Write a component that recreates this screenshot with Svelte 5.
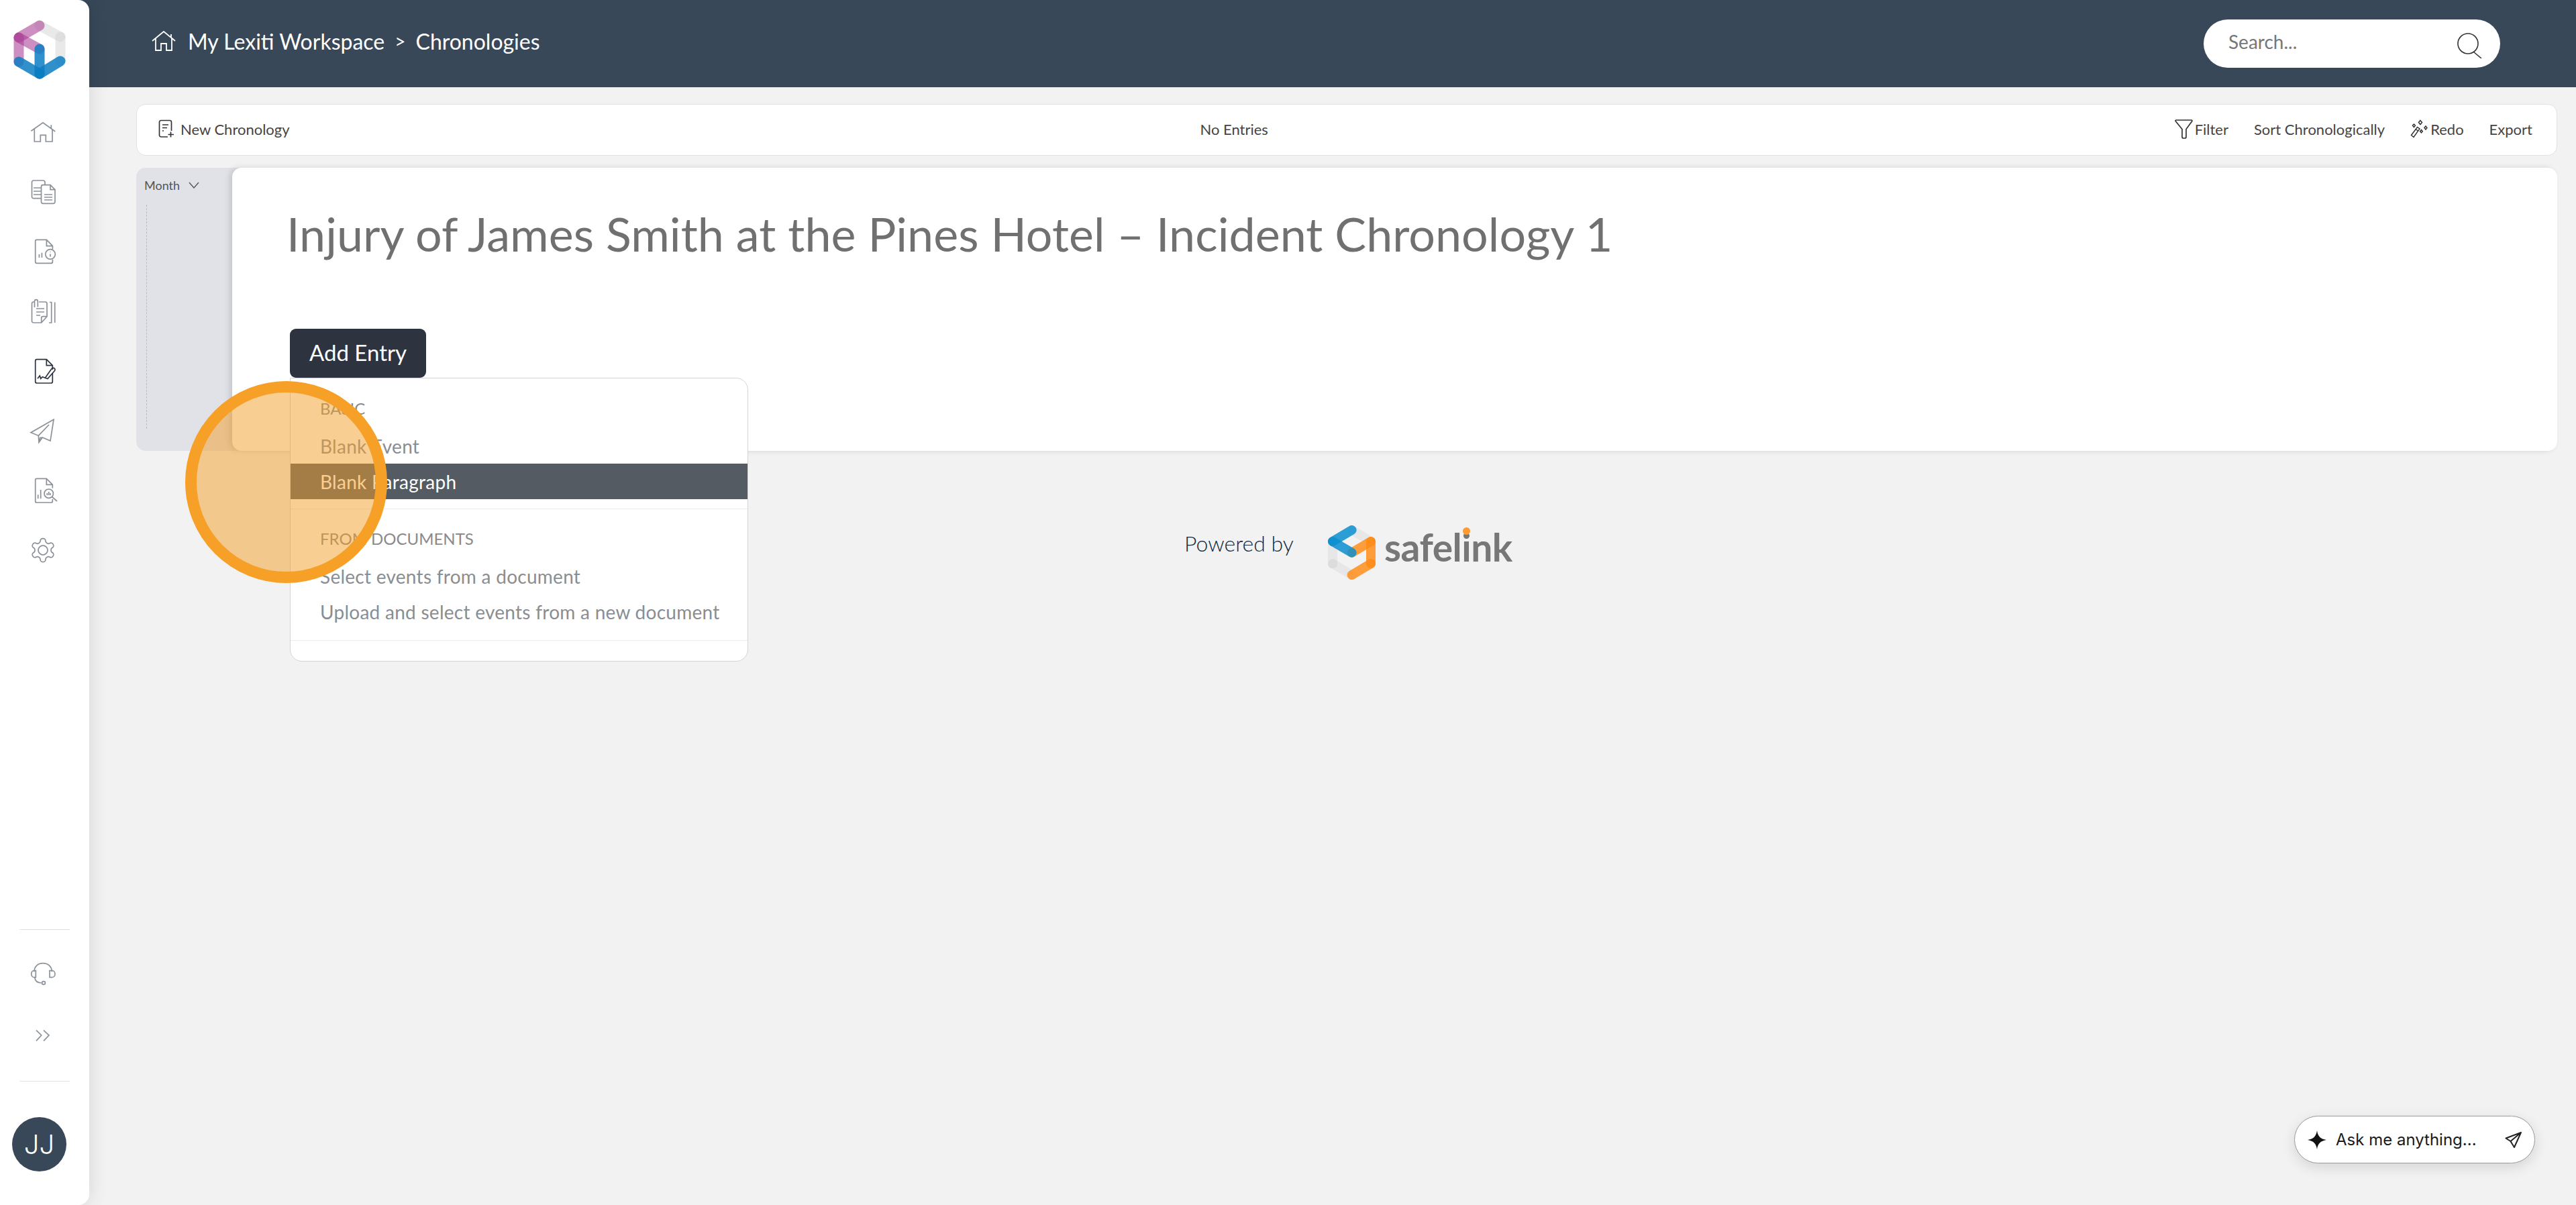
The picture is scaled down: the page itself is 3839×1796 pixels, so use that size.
<script>
  const grey = "#8b929a";
  const menuBasic = ["Blank Event", "Blank Paragraph"];
  const menuDocs = ["Select events from a document", "Upload and select events from a new document"];
</script>

<div class="app">
  <aside class="sidebar">
    <svg class="logo" viewBox="0 0 90 100" fill="none" stroke-width="15" stroke-linecap="round">
      <g stroke="#d4d4d4" stroke-opacity=".5">
        <path d="M45 13 76 30" />
        <path d="M76 30V66" />
      </g>
      <g stroke="#a83c96" stroke-opacity=".58">
        <path d="M14 31 45 13" />
        <path d="M14 31 45 48" />
        <path d="M14 31V67" />
      </g>
      <g stroke="#0a7cc2" stroke-opacity=".85">
        <path d="M14 67 45 85" />
        <path d="M45 85 76 66" />
        <path d="M45 48V85" />
      </g>
    </svg>

    <nav class="nav">
      <svg viewBox="0 0 48 48" stroke={grey}>
        <path d="M6.3 22.3 24 9.7 42.3 23M36.3 13.3V19M11.3 19V38h9V28.3h8V38H38V19" />
      </svg>
      <svg viewBox="0 0 48 48" stroke={grey}>
        <path d="M21.5 33.7H10a2.500 2.500 0 0 1-2.500-2.500V9.500A2.500 2.500 0 0 1 10 7h14a3 3 0 0 1 3 3v3.700M10 18h11.500M10 23h11.500M10 28h11.500" />
        <path d="M24 13.700h11l7 7v18.100a2.500 2.500 0 0 1-2.500 2.500H24a2.500 2.500 0 0 1-2.500-2.500V16.200a2.500 2.500 0 0 1 2.500-2.500zM35 13.700v7h7M26 28h12M26 32h12M26 36h12" />
      </svg>
      <svg viewBox="0 0 48 48" stroke={grey}>
        <path d="M38.400 20.500v-4.800l-9-9.400H14.700a2 2 0 0 0-2 2v31a2 2 0 0 0 2 2h21.700a2 2 0 0 0 2-2v-3.500M29.400 6.300v9.400h9M18.400 33v-5M22.400 33v-7.300" />
        <circle cx="35" cy="28" r="7.300" />
        <path d="M35 27.500v4M35 24.300v.8" />
      </svg>
      <svg viewBox="0 0 48 48" stroke={grey}>
        <path d="M18 10h9.500a2.500 2.500 0 0 1 2.500 2.500v19.200L21.700 41H10a2.500 2.500 0 0 1-2.500-2.500v-26A2.500 2.500 0 0 1 10 10h1M21.700 41v-7a2.300 2.300 0 0 1 2.300-2.300h6" />
        <path d="M11.500 18V9a2.400 2.400 0 0 1 4.800 0v8.500M14 20h12M14 25h12M14 30h6" />
        <path d="M33 41h3.700V10.500H34M41.700 10.500V41" />
      </svg>
      <svg viewBox="0 0 48 48" stroke="#2c3340" stroke-width="2.100">
        <path d="M38.300 22v-6.300l-9-9H15a2.300 2.300 0 0 0-2.300 2.300v30.700a2.300 2.300 0 0 0 2.300 2.300h21a2.300 2.300 0 0 0 2.300-2.300V27M29.300 6.700v9h9" />
        <path d="M16 35.300 19.300 31l1.400 4.300 2.600-2.600 4 1.600L37 20.500a2.700 2.700 0 0 1 4.500 3L31 35.500l-3.700-1.200" />
      </svg>
      <svg viewBox="0 0 48 48" stroke={grey}>
        <path d="M40 7.300 6 26.700l11.300 4.600.7 10 5.300-7.300L35 39zM17.300 31.300 33 15M18 41.300l2-7 3.300-.3" />
      </svg>
      <svg viewBox="0 0 48 48" stroke={grey}>
        <path d="M38.300 20.500v-5.200l-9-9H14.700a2 2 0 0 0-2 2V40a2 2 0 0 0 2 2h21.600a2 2 0 0 0 2-2v-3M29.300 6.300v9h9M16.700 36.300v-6M20.700 36.300V23" />
        <circle cx="32.700" cy="28.700" r="6.700" />
        <path d="M30.300 31v-3M32.700 31v-5M35 31v-3M37.500 33.500 45 40" />
      </svg>
      <svg class="gear" viewBox="0 0 24 24" stroke={grey} stroke-width="1.050">
        <path d="M12.220 2h-.44a2 2 0 0 0-2 2v.18a2 2 0 0 1-1 1.730l-.43.250a2 2 0 0 1-2 0l-.150-.080a2 2 0 0 0-2.730.730l-.220.380a2 2 0 0 0 .730 2.730l.150.100a2 2 0 0 1 1 1.720v.510a2 2 0 0 1-1 1.740l-.15.090a2 2 0 0 0-.730 2.730l.220.380a2 2 0 0 0 2.730.730l.150-.080a2 2 0 0 1 2 0l.430.250a2 2 0 0 1 1 1.730V20a2 2 0 0 0 2 2h.440a2 2 0 0 0 2-2v-.180a2 2 0 0 1 1-1.730l.430-.250a2 2 0 0 1 2 0l.150.080a2 2 0 0 0 2.730-.730l.220-.390a2 2 0 0 0-.730-2.730l-.150-.080a2 2 0 0 1-1-1.740v-.500a2 2 0 0 1 1-1.740l.15-.090a2 2 0 0 0 .730-2.730l-.220-.380a2 2 0 0 0-2.730-.730l-.15.080a2 2 0 0 1-2 0l-.43-.25a2 2 0 0 1-1-1.730V4a2 2 0 0 0-2-2z" />
        <circle cx="12" cy="12" r="4" />
      </svg>
    </nav>

    <div class="side-foot">
      <hr />
      <svg class="headset" viewBox="0 0 48 48" stroke={grey}>
        <path d="M11 21.300C11 13.500 16.500 8.700 24 8.700s13.300 4.800 13.300 12.600M13.300 19.700H11a4.300 5 0 0 0 0 10h2.300zM34 19.700h3.500a4.500 5 0 0 1 0 10H34zM11.700 29.700c.5 5 4 8.300 10 8.300" />
        <circle cx="25" cy="38" r="2.400" />
      </svg>
      <svg class="chev" viewBox="0 0 48 48" stroke={grey}>
        <path d="M14 16.700l7.700 7.300-7.700 8.300M25 16.700l8 7.300-8 8.300" />
      </svg>
      <hr class="second" />
      <div class="avatar">JJ</div>
    </div>
  </aside>

  <div class="main">
    <header class="topbar">
      <div class="crumbs">
        <svg class="crumb-home" viewBox="0 0 36 30" stroke="#fff">
          <path d="M1 15 18 1l17 14M29 5v5M6 11v18h8v-10h8v10h8V11" />
        </svg>
        <span>My Lexiti Workspace</span>
        <span class="sep">&gt;</span>
        <span>Chronologies</span>
      </div>
      <div class="search">
        <span>Search...</span>
        <svg viewBox="0 0 40 40" stroke="#333">
          <circle cx="18" cy="18" r="15" />
          <path d="m26 30 12 10" />
        </svg>
      </div>
    </header>

    <div class="content">
      <div class="toolbar">
        <div class="tool first">
          <svg viewBox="0 0 24 28" stroke="#333" width="24" height="28">
            <path d="M14 26H4a2.500 2.500 0 0 1-2.500-2.500V4A2.500 2.500 0 0 1 4 1.500h13A2.500 2.500 0 0 1 19.500 4v13" stroke-width="1.700" />
            <path d="M6 8h9M6 12.500h7M6 17h2M18.500 18.500v8M14.500 22.500h8.500" stroke-width="1.700" />
          </svg>
          <span>New Chronology</span>
        </div>
        <span class="status">No Entries</span>
        <div class="tools">
          <div class="tool filter">
            <svg viewBox="0 0 27 30" stroke="#333" stroke-width="1.700" width="27" height="30">
              <path d="M2 2h23a1 1 0 0 1 .8 1.500L17 15.500V27a2 2 0 0 1-2 2h-2a2 2 0 0 1-2-2V15.500L1.200 3.500A1 1 0 0 1 2 2z" />
            </svg>
            <span>Filter</span>
          </div>
          <span class="tool">Sort Chronologically</span>
          <div class="tool redo">
            <svg viewBox="0 0 26 30" stroke="#333" stroke-width="1.500" width="26" height="30">
              <path d="m1.500 24.500 9-12 3.500 2.500-9 12.500zM8 15.500l3.500 2.500M15 2.500l2.500 3-2.500 3-2.500-3zM23 11l2 2.500-2 2.500-2-2.500zM5.500 8l2 2-2 2.500-2-2.500zM16.500 16.500l1.800 2.200-1.800 2.200-1.800-2.200z" />
            </svg>
            <span>Redo</span>
          </div>
          <span class="tool">Export</span>
        </div>
      </div>

      <section class="timeline">
        <div class="month">
          <div class="month-pick">
            <span>Month</span>
            <svg viewBox="0 0 16 10" stroke="#555" stroke-width="1.400" width="16" height="10">
              <path d="m1 1 7 8 7-8" />
            </svg>
          </div>
          <div class="rail"></div>
        </div>
        <div class="card">
          <h1>Injury of James Smith at the Pines Hotel – Incident Chronology 1</h1>
          <div class="add-wrap">
            <button class="add">Add Entry</button>
            <div class="menu">
              <div class="group basic">
                <div class="label">Basic</div>
                {#each menuBasic as item, i}
                  <div class="item" class:active={i === 1}>{item}</div>
                {/each}
              </div>
              <div class="group docs">
                <div class="label">From Documents</div>
                {#each menuDocs as item}
                  <div class="item">{item}</div>
                {/each}
              </div>
            </div>
          </div>
        </div>
      </section>

      <footer class="powered">
        <span class="by">Powered by</span>
        <svg class="sl-mark" viewBox="0 0 74 84" fill="none" stroke-width="14" stroke-linecap="round">
          <g stroke="#d8d8d8" stroke-opacity=".4">
            <path d="M36.600 8 65 25" />
            <path d="M8 25V58" />
            <path d="M8 58l28.600 17" />
          </g>
          <circle cx="8" cy="58" r="7" fill="#dcdcdc" />
          <g stroke="#ff8a14" stroke-opacity=".82">
            <path d="M36.600 41.700 65 25" />
            <path d="M65 25V58" />
            <path d="M65 58 36.600 75" />
          </g>
          <g stroke="#0a8fd0" stroke-opacity=".85">
            <path d="M36.600 8 8 25" />
            <path d="M8 25l28.600 16.700" />
          </g>
        </svg>
        <span class="wordmark">safel<span class="dot-i">i</span>nk</span>
      </footer>
    </div>
  </div>

  <div class="spot"></div>

  <div class="ask">
    <svg class="star" viewBox="0 0 28 28" width="28" height="28">
      <path d="M14 0c1.300 8.500 5 12.500 14 14-9 1.500-12.700 5.500-14 14-1.300-8.500-5-12.500-14-14C9 12.500 12.700 8.500 14 0z" fill="#111" />
    </svg>
    <span>Ask me anything...</span>
    <svg class="send" viewBox="0 0 26 26" stroke="#222" stroke-width="2" width="26" height="26">
      <path d="M24 2 1.500 10.500 8.500 15 14 24zM8.500 15 24 2" stroke-linejoin="round" />
    </svg>
  </div>
</div>

<style>
  :global(body) {
    margin: 0;
    background: #f2f2f2;
    font-family: "Lato", "Open Sans", sans-serif;
  }
  svg {
    fill: none;
    display: block;
    flex: none;
  }
  .app {
    position: relative;
    display: flex;
    height: 100vh;
    overflow: hidden;
  }
  .sidebar {
    position: relative;
    z-index: 2;
    flex: none;
    display: flex;
    flex-direction: column;
    width: 133px;
    background: #fff;
    border-radius: 0 16px 16px 0;
    box-shadow: 0 0 30px rgba(0, 0, 0, 0.12);
  }
  .logo {
    width: 90px;
    height: 100px;
    margin: 25px 0 0 14px;
  }
  .nav {
    display: flex;
    flex-direction: column;
    gap: 41px;
    margin: 48px 0 0 40px;
  }
  .nav svg,
  .side-foot svg {
    width: 48px;
    height: 48px;
    stroke-width: 1.7;
  }
  .nav .gear {
    width: 42px;
    height: 42px;
    margin: 3px;
    stroke-width: 1;
  }
  .side-foot {
    margin-top: auto;
    padding-bottom: 50px;
    display: flex;
    flex-direction: column;
  }
  .side-foot hr {
    width: 75px;
    height: 1px;
    margin: 0 0 0 29px;
    border: 0;
    background: #e2e2e2;
  }
  .headset {
    margin: 41px 0 0 40px;
  }
  .chev {
    margin: 44px 0 0 40px;
  }
  .side-foot hr.second {
    margin-top: 44px;
  }
  .avatar {
    width: 81px;
    height: 81px;
    margin: 53px 0 0 18px;
    border-radius: 50%;
    background: #384859;
    color: #fff;
    font-family: "Inter", sans-serif;
    font-size: 40px;
    font-weight: 300;
    display: flex;
    align-items: center;
    justify-content: center;
  }
  .main {
    flex: 1;
    min-width: 0;
    margin-left: -16px;
  }
  .topbar {
    height: 130px;
    box-sizing: border-box;
    padding: 0 113px 6px 109px;
    background: #384859;
    display: flex;
    align-items: center;
    justify-content: space-between;
    color: #fff;
  }
  .crumbs {
    display: flex;
    align-items: center;
    font-size: 32px;
    margin-top: -2px;
  }
  .crumb-home {
    width: 36px;
    height: 30px;
    margin-right: 18px;
    stroke-width: 1.800;
  }
  .sep {
    margin: 0 15px;
    font-size: 28px;
  }
  .search {
    width: 442px;
    height: 72px;
    margin-top: 6px;
    box-sizing: border-box;
    padding: 0 26px 6px 37px;
    border-radius: 36px;
    background: #fff;
    display: flex;
    align-items: center;
    justify-content: space-between;
    color: #777;
    font-size: 28px;
  }
  .search svg {
    width: 40px;
    height: 40px;
    margin-top: 10px;
    stroke-width: 1.600;
  }
  .content {
    padding: 25px 28px 0 86px;
  }
  .toolbar {
    height: 77px;
    box-sizing: border-box;
    padding: 0 36px 3px 32px;
    background: #fff;
    border: 1px solid #e2e2e2;
    border-radius: 14px;
    display: flex;
    align-items: center;
    justify-content: space-between;
    color: #444;
    font-size: 22px;
  }
  .status {
    margin-left: 6px;
  }
  .tool {
    display: flex;
    align-items: center;
    gap: 9px;
  }
  .tools {
    display: flex;
    align-items: center;
    gap: 38px;
  }
  .filter {
    gap: 3px;
  }
  .redo {
    gap: 4px;
  }
  .timeline {
    display: flex;
    height: 422px;
    margin-top: 18px;
    border-radius: 14px;
    background: #e1e2e8;
  }
  .month {
    flex: none;
    width: 143px;
    padding: 0 12px;
    box-sizing: border-box;
    color: #555;
    font-size: 18px;
  }
  .month-pick {
    display: flex;
    align-items: center;
    gap: 13px;
    height: 52px;
  }
  .rail {
    height: 334px;
    margin: 3px 0 0 3px;
    border-left: 1px dashed #bbbcc2;
  }
  .card {
    flex: 1;
    padding: 0 0 0 83px;
    background: #fff;
    border-radius: 14px;
    box-shadow: -4px 0 8px rgba(0, 0, 0, 0.12);
  }
  h1 {
    margin: 0 0 0 -2px;
    padding-top: 57px;
    height: 240px;
    box-sizing: border-box;
    color: #707070;
    font-size: 70px;
    line-height: 82px;
    font-weight: 400;
    letter-spacing: 0.03px;
  }
  .add-wrap {
    position: relative;
    margin-left: 3px;
  }
  .add {
    display: block;
    width: 203px;
    height: 73px;
    padding: 0 0 4px;
    border: 0;
    border-radius: 9px;
    background: #2d3440;
    color: #fff;
    font: inherit;
    font-size: 33px;
  }
  .menu {
    position: absolute;
    top: 73px;
    left: 0;
    z-index: 3;
    width: 683px;
    height: 423px;
    box-sizing: border-box;
    background: #fff;
    border: 1px solid #d4d4d4;
    border-radius: 0 18px 18px 18px;
    color: #8a8d91;
    font-size: 28px;
    letter-spacing: 0.27px;
  }
  .group {
    border-bottom: 1px solid #ececec;
  }
  .basic {
    padding: 18px 0 14px;
  }
  .docs {
    padding: 17px 0 16px;
  }
  .label {
    height: 52px;
    margin-bottom: 4px;
    padding-left: 44px;
    display: flex;
    align-items: center;
    text-transform: uppercase;
    font-size: 24px;
    letter-spacing: 0;
    color: #8a8a8a;
  }
  .item {
    height: 53px;
    padding-left: 44px;
    display: flex;
    align-items: center;
  }
  .basic .item:first-of-type {
    margin-bottom: 2px;
  }
  .item.active {
    background: #555b63;
    color: #fff;
  }
  .powered {
    display: flex;
    align-items: center;
    margin: 110px 0 0 0;
    padding-left: 1564px;
  }
  .by {
    width: 213px;
    margin-left: -2px;
    flex: none;
    color: #0f2a42;
    font-size: 32px;
    font-weight: 300;
    margin-top: -30px;
  }
  .sl-mark {
    width: 74px;
    height: 84px;
  }
  .wordmark {
    margin: -18px 0 0 11px;
    color: #777;
    font-size: 57px;
    font-weight: 700;
    letter-spacing: -0.5px;
    line-height: 1;
  }
  .dot-i {
    position: relative;
  }
  .dot-i::after {
    content: "";
    position: absolute;
    left: 50%;
    top: 5px;
    width: 11px;
    height: 11px;
    margin-left: -5.500px;
    border-radius: 50%;
    background: #ff9b30;
  }
  .spot {
    position: absolute;
    left: 276px;
    top: 568px;
    z-index: 4;
    width: 301px;
    height: 301px;
    box-sizing: border-box;
    border: 17px solid #f7a028;
    border-radius: 50%;
    background: rgba(244, 158, 39, 0.5);
    pointer-events: none;
  }
  .ask {
    position: absolute;
    right: 61px;
    bottom: 62px;
    z-index: 3;
    width: 359px;
    height: 71px;
    box-sizing: border-box;
    padding: 0 18px 0 19px;
    background: #fff;
    border: 1px solid #999;
    border-radius: 36px;
    box-shadow: 0 6px 20px rgba(0, 0, 0, 0.12);
    display: flex;
    align-items: center;
    color: #1a1a1a;
    font-family: "Inter", sans-serif;
    font-size: 24px;
  }
  .ask span {
    margin-left: 14px;
    flex: 1;
  }
</style>
